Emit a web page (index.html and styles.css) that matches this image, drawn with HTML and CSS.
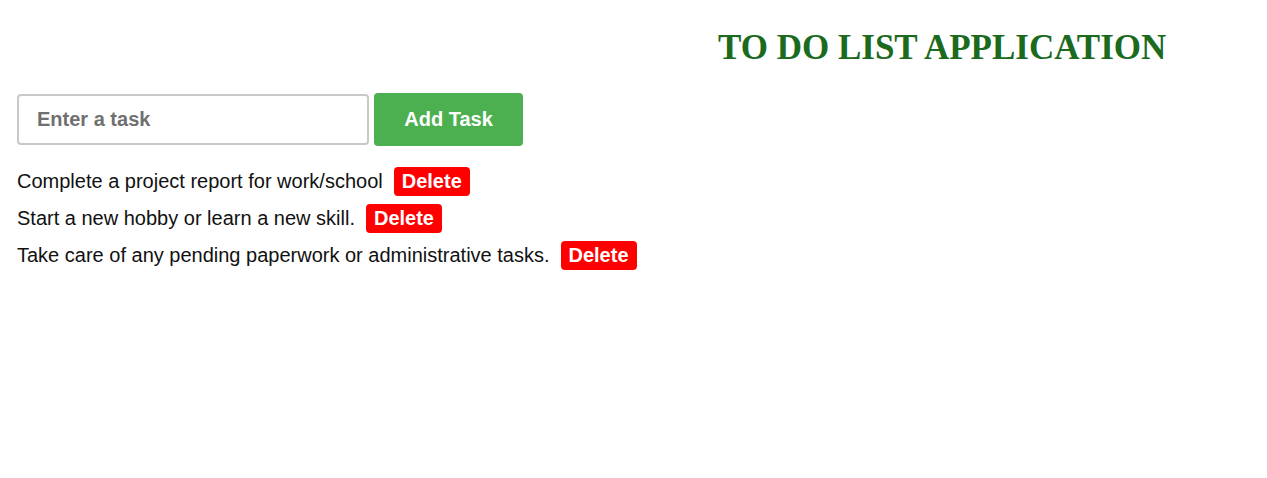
FILE: index.html
```html
<!DOCTYPE html>
<html>
<head>
<meta charset="utf-8">
<link rel="stylesheet" href="styles.css">
</head>
<body>
<h1 class="title">TO DO LIST APPLICATION</h1>
<div class="entry">
  <input class="task-input" type="text" placeholder="Enter a task">
  <button class="add-btn">Add Task</button>
</div>
<ul class="tasks">
  <li class="task"><span>Complete a project report for work/school</span><button class="del-btn">Delete</button></li>
  <li class="task"><span>Start a new hobby or learn a new skill.</span><button class="del-btn">Delete</button></li>
  <li class="task"><span>Take care of any pending paperwork or administrative tasks.</span><button class="del-btn">Delete</button></li>
</ul>
</body>
</html>
```
FILE: styles.css
```css
body {
  margin: 0;
  padding: 0 17px;
  font-family: "Liberation Sans", Arial, sans-serif;
  color: #111;
  background: #fff;
}
.title {
  margin: 28px 0 0 0;
  padding-left: 701px;
  text-align: left;
  white-space: nowrap;
  font-family: "Liberation Serif", "Times New Roman", serif;
  font-weight: bold;
  font-size: 35px;
  color: #1b6a1e;
  line-height: 40px;
}
.entry {
  display: flex;
  align-items: center;
  gap: 5px;
  margin-top: 25px;
}
.task-input {
  width: 352px;
  height: 51px;
  box-sizing: border-box;
  border: 2px solid #c8c8c8;
  border-radius: 4px;
  padding: 0 18px;
  font-family: "Liberation Sans", Arial, sans-serif;
  font-size: 20px;
  font-weight: bold;
  outline: none;
}
.task-input::placeholder {
  color: #707070;
}
.add-btn {
  width: 149px;
  height: 53px;
  border: none;
  border-radius: 4px;
  background: #4caf50;
  color: #fff;
  font-family: "Liberation Sans", Arial, sans-serif;
  font-size: 20px;
  font-weight: bold;
  cursor: pointer;
}
.tasks {
  list-style: none;
  margin: 21px 0 0 0;
  padding: 0;
  display: flex;
  flex-direction: column;
  gap: 8px;
}
.task {
  display: flex;
  align-items: center;
  gap: 11px;
  font-size: 20px;
  height: 29px;
}
.del-btn {
  height: 29px;
  padding: 0 8px;
  border: none;
  border-radius: 4px;
  background: #ff0000;
  color: #fff;
  font-family: "Liberation Sans", Arial, sans-serif;
  font-size: 20px;
  font-weight: bold;
}
```
